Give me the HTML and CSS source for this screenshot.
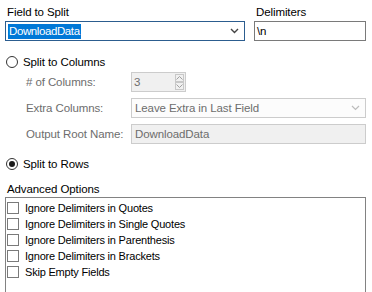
FILE: index.html
```html
<!DOCTYPE html>
<html lang="en">
<head>
    <meta charset="UTF-8">
    <title>Text To Columns</title>
    <link rel="stylesheet" href="styles.css">
</head>
<body>
    <div class="panel">
        <div class="top-row">
            <div class="field-group">
                <label class="caption">Field to Split</label>
                <div class="combo focused">
                    <span class="selected-text">DownloadData</span>
                    <svg class="chevron" width="9" height="6" viewBox="0 0 9 6"><path d="M1 1 L4.5 4.5 L8 1" fill="none" stroke="#444" stroke-width="1.4"/></svg>
                </div>
            </div>
            <div class="delim-group">
                <label class="caption">Delimiters</label>
                <div class="textbox">\n</div>
            </div>
        </div>

        <div class="radio-row cols-radio">
            <span class="radio"></span>
            <span>Split to Columns</span>
        </div>

        <div class="sub-row first-sub">
            <span class="sub-label"># of Columns:</span>
            <div class="numeric">
                <span>3</span>
                <div class="spin">
                    <span class="spin-btn"><svg width="7" height="4" viewBox="0 0 7 4"><path d="M0.5 3.5 L3.5 0.5 L6.5 3.5" fill="none" stroke="#a0a0a0" stroke-width="1"/></svg></span>
                    <span class="spin-btn"><svg width="7" height="4" viewBox="0 0 7 4"><path d="M0.5 0.5 L3.5 3.5 L6.5 0.5" fill="none" stroke="#a0a0a0" stroke-width="1"/></svg></span>
                </div>
            </div>
        </div>
        <div class="sub-row">
            <span class="sub-label">Extra Columns:</span>
            <div class="combo disabled-combo wide">
                <span>Leave Extra in Last Field</span>
                <svg class="chevron" width="9" height="6" viewBox="0 0 9 6"><path d="M1 1 L4.5 4.5 L8 1" fill="none" stroke="#bcbcbc" stroke-width="1.2"/></svg>
            </div>
        </div>
        <div class="sub-row">
            <span class="sub-label">Output Root Name:</span>
            <div class="textbox disabled wide">DownloadData</div>
        </div>

        <div class="radio-row rows-radio">
            <span class="radio checked"></span>
            <span>Split to Rows</span>
        </div>

        <div class="caption adv-caption">Advanced Options</div>
        <div class="checklist">
            <div class="check-item"><span class="box"></span>Ignore Delimiters in Quotes</div>
            <div class="check-item"><span class="box"></span>Ignore Delimiters in Single Quotes</div>
            <div class="check-item"><span class="box"></span>Ignore Delimiters in Parenthesis</div>
            <div class="check-item"><span class="box"></span>Ignore Delimiters in Brackets</div>
            <div class="check-item"><span class="box"></span>Skip Empty Fields</div>
        </div>
    </div>
</body>
</html>
```

FILE: styles.css
```css
body { margin: 0; height: 292px; background: #fff; font-family: "Liberation Sans", Arial, sans-serif; font-size: 11.5px; letter-spacing: -0.1px; color: #000; overflow: hidden; }
.panel { padding: 5px 6px 0 5px; width: 361px; }
.caption { display: block; height: 14px; line-height: 14px; margin-left: 2px; }
.top-row { display: flex; gap: 9px; }
.field-group { width: 240px; }
.delim-group { width: 112px; }
.combo, .textbox { box-sizing: border-box; height: 20px; margin-top: 2px; border: 1px solid #7a7a7a; display: flex; align-items: center; padding-left: 2px; background: #fff; }
.combo { justify-content: space-between; padding-right: 5px; }
.combo.focused { border-color: #2c5d8f; }
.selected-text { background: #0078d7; color: #fff; padding: 1px 1px; line-height: 13px; letter-spacing: -0.4px; }
.radio-row { display: flex; align-items: center; gap: 5px; height: 14px; }
.cols-radio { margin-top: 14px; }
.rows-radio { margin-top: 13px; }
.radio { width: 10px; height: 10px; border: 1px solid #333; border-radius: 50%; margin-left: 1px; background: #fff; position: relative; }
.radio.checked::after { content: ""; position: absolute; left: 2px; top: 2px; width: 6px; height: 6px; border-radius: 50%; background: #1a1a1a; }
.sub-row { display: flex; align-items: center; height: 20px; margin-top: 6px; }
.sub-row.first-sub { margin-top: 3px; }
.sub-label { width: 105px; padding-left: 21px; color: #6d6d6d; }
.numeric { box-sizing: border-box; width: 55px; height: 20px; border: 1px solid #ccc; background: #f0f0f0; color: #6d6d6d; display: flex; align-items: center; justify-content: space-between; padding-left: 2px; }
.spin { display: flex; flex-direction: column; height: 16px; margin-right: 1px; }
.spin-btn { box-sizing: border-box; width: 9px; height: 8px; border: 1px solid #c8c8c8; background: #f0f0f0; display: flex; align-items: center; justify-content: center; }
.wide { width: 235px; margin-top: 0; }
.disabled-combo { border-color: #ccc; color: #6d6d6d; background: #fcfcfc; padding-left: 3px; }
.textbox.disabled { border-color: #ccc; background: #f0f0f0; color: #6d6d6d; padding-left: 3px; }
.adv-caption { margin-top: 11px; margin-left: 2px; }
.checklist { box-sizing: border-box; width: 361px; height: 96px; margin-top: 1px; border: 1px solid #828282; padding: 2px 0 0 1px; }
.check-item { display: flex; align-items: center; height: 16px; font-size: 11px; letter-spacing: -0.2px; }
.box { box-sizing: border-box; width: 12px; height: 12px; border: 1px solid #7a7a7a; margin: 0 6px 0 0; background: #fff; }
```
